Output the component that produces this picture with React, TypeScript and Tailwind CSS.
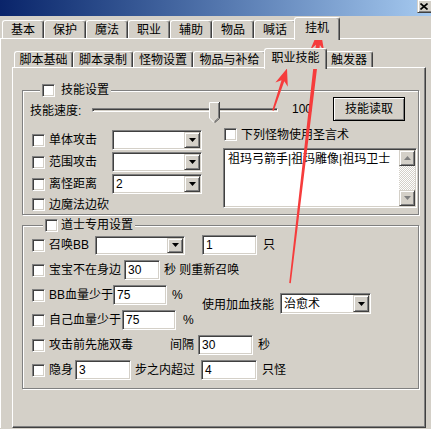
import React from "react";

const sunken =
  "border border-t-[#808080] border-l-[#808080] border-r-white border-b-white shadow-[inset_1px_1px_0_#404040,inset_-1px_-1px_0_#d4d0c8]";
const raised =
  "border border-t-[#d4d0c8] border-l-[#d4d0c8] border-r-[#404040] border-b-[#404040] shadow-[inset_1px_1px_0_#fff,inset_-1px_-1px_0_#808080]";
const etched = "border border-[#808080] shadow-[inset_1px_1px_0_#fff,1px_1px_0_#fff]";

const Check = () => <div className={`w-[13px] h-[13px] shrink-0 bg-white ${sunken}`} />;

const DownArrow = ({ color = "#000" }: { color?: string }) => (
  <svg width="7" height="4" viewBox="0 0 7 4">
    <path d="M0 0H7L3.5 4Z" fill={color} />
  </svg>
);

const UpArrow = ({ color = "#808080" }: { color?: string }) => (
  <svg width="7" height="4" viewBox="0 0 7 4">
    <path d="M0 4H7L3.5 0Z" fill={color} />
  </svg>
);

const Combo = ({ className, value = "" }: { className: string; value?: string }) => (
  <div className={`${className} flex shrink-0 p-[1px] bg-white ${sunken}`}>
    <span className="flex-1 pl-[2px] flex items-center whitespace-nowrap">{value}</span>
    <div className={`w-[16px] h-full flex items-center justify-center bg-[#d4d0c8] ${raised}`}>
      <DownArrow />
    </div>
  </div>
);

const Edit = ({ className, value }: { className: string; value: string }) => (
  <div className={`${className} h-[20px] shrink-0 flex items-center pl-[3px] bg-white ${sunken}`}>{value}</div>
);

const Tab = ({ label, className, active }: { label: string; className: string; active?: boolean }) => (
  <div
    className={`${className} shrink-0 flex items-center justify-center whitespace-nowrap bg-[#d4d0c8] border-t border-l border-r border-t-white border-l-white border-r-[#404040] rounded-t-[3px] shadow-[inset_-1px_0_0_#808080] ${
      active ? "relative z-10 -mx-[2px] -mb-[2px] pb-[2px]" : ""
    }`}
  >
    {label}
  </div>
);

const outerTabs = ["基本", "保护", "魔法", "职业", "辅助", "物品", "喊话"];

export default function App() {
  return (
    <div className="relative w-[431px] h-[429px] overflow-hidden bg-[#d4d0c8] text-[12px] leading-[14px] text-black font-['Liberation_Sans','Noto_Sans_CJK_SC',sans-serif]">
      {/* title bar */}
      <div className="h-[16px] flex justify-end bg-linear-to-r from-[#0a246a] to-[#a6caf0]">
        <div className={`w-[16px] h-[14px] -mt-[1px] -mr-[2px] flex items-center justify-center pr-[2px] bg-[#d4d0c8] ${raised}`}>
          <svg width="8" height="7" viewBox="0 0 8 7">
            <path d="M0.5 0.5L7.5 6.5M7.5 0.5L0.5 6.5" stroke="#000" strokeWidth="1.6" />
          </svg>
        </div>
      </div>

      {/* outer tabs */}
      <div className="flex items-end h-[22px] pl-[2px]">
        {outerTabs.map((t) => (
          <Tab key={t} label={t} className="w-[42px] h-[18px]" />
        ))}
        <Tab label="挂机" className="w-[46px] h-[23px]" active />
      </div>

      <div className="border-t border-l border-white pl-[11px] pt-[9px]">
        {/* inner tabs */}
        <div className="flex items-end h-[19px] pl-[2px]">
          <Tab label="脚本基础" className="w-[59px] h-[16px]" />
          <Tab label="脚本录制" className="w-[60px] h-[16px]" />
          <Tab label="怪物设置" className="w-[60px] h-[16px]" />
          <Tab label="物品与补给" className="w-[73px] h-[16px]" />
          <Tab label="职业技能" className="w-[63px] h-[21px]" active />
          <Tab label="触发器" className="w-[48px] h-[16px]" />
        </div>

        <div className="w-[414px] h-[361px] border border-t-white border-l-white border-r-[#404040] border-b-[#404040] shadow-[inset_-1px_-1px_0_#808080] pl-[9px] pt-[22px]">
          {/* group 1 */}
          <div className={`relative w-[397px] h-[125px] ${etched}`}>
            <div className="absolute left-[17px] -top-[8px] flex items-center h-[14px] px-[2px] bg-[#d4d0c8]">
              <Check />
              <span className="ml-[6px]">技能设置</span>
            </div>

            <div className="flex items-center h-[24px] mt-[6px] pl-[7px]">
              <span className="w-[62px] pt-[4px]">技能速度:</span>
              <div className="relative w-[186px] h-[24px] shrink-0">
                <div className="absolute left-0 right-0 top-[11px] h-[4px] border border-t-[#808080] border-l-[#808080] border-r-white border-b-white shadow-[inset_1px_1px_0_#404040]" />
                <svg className="absolute left-[117px] top-[5px]" width="11" height="21" viewBox="0 0 11 21">
                  <path d="M0 0H11V16L5.5 21L0 16Z" fill="#d4d0c8" />
                  <path d="M0.5 16V0.5H10" stroke="#fff" fill="none" />
                  <path d="M0.5 16L5 20.5" stroke="#fff" fill="none" />
                  <path d="M10.5 0V16.3L5.5 20.8" stroke="#404040" fill="none" />
                  <path d="M9.5 1V15.8L5.5 19.5" stroke="#808080" fill="none" />
                </svg>
              </div>
              <span className="w-[55px] pl-[14px] shrink-0">100</span>
              <div className="w-[72px] h-[24px] shrink-0 flex items-center justify-center border border-black shadow-[inset_1px_1px_0_#fff,inset_-1px_-1px_0_#808080]">
                技能读取
              </div>
            </div>

            <div className="flex mt-[9px] pl-[9px]">
              <div className="w-[170px] shrink-0">
                <div className="flex items-center h-[20px]">
                  <Check />
                  <span className="ml-[4px] w-[63px]">单体攻击</span>
                  <Combo className="w-[90px] h-[20px]" />
                </div>
                <div className="flex items-center h-[20px] mt-[2px]">
                  <Check />
                  <span className="ml-[4px] w-[63px]">范围攻击</span>
                  <Combo className="w-[90px] h-[20px]" />
                </div>
                <div className="flex items-center h-[20px] mt-[2px]">
                  <Check />
                  <span className="ml-[4px] w-[63px]">离怪距离</span>
                  <Combo className="w-[90px] h-[20px]" value="2" />
                </div>
                <div className="flex items-center h-[13px] mt-[4px]">
                  <Check />
                  <span className="ml-[4px]">边魔法边砍</span>
                </div>
              </div>

              <div className="ml-[21px] -mt-[2px] w-[194px]">
                <div className="flex items-center h-[13px] pl-[1px]">
                  <Check />
                  <span className="ml-[4px] whitespace-nowrap">下列怪物使用圣言术</span>
                </div>
                <div className={`mt-[7px] w-[194px] h-[60px] flex p-[1px] bg-white ${sunken}`}>
                  <div className="flex-1 pl-[3px] pt-[2px] whitespace-nowrap overflow-hidden">
                    祖玛弓箭手|祖玛雕像|祖玛卫士
                  </div>
                  <div className="w-[16px] flex flex-col">
                    <div className={`h-[16px] flex items-center justify-center bg-[#d4d0c8] ${raised}`}>
                      <UpArrow />
                    </div>
                    <div className="flex-1 bg-[image:repeating-conic-gradient(#fff_0_25%,#d4d0c8_0_50%)] bg-[length:2px_2px]" />
                    <div className={`h-[16px] flex items-center justify-center bg-[#d4d0c8] ${raised}`}>
                      <DownArrow color="#808080" />
                    </div>
                  </div>
                </div>
              </div>
            </div>
          </div>

          {/* group 2 */}
          <div className={`relative w-[397px] h-[164px] mt-[10px] pl-[9px] pt-[9px] ${etched}`}>
            <div className="absolute left-[20px] -top-[8px] flex items-center h-[14px] px-[2px] bg-[#d4d0c8]">
              <Check />
              <span className="ml-[3px]">道士专用设置</span>
            </div>

            <div className="flex items-center h-[20px]">
              <Check />
              <span className="ml-[4px] w-[46px]">召唤BB</span>
              <Combo className="w-[90px] h-[19px]" />
              <Edit className="ml-[17px] w-[55px]" value="1" />
              <span className="ml-[6px]">只</span>
            </div>

            <div className="flex items-center h-[20px] mt-[5px]">
              <Check />
              <span className="ml-[4px] w-[75px]">宝宝不在身边</span>
              <Edit className="w-[36px]" value="30" />
              <span className="ml-[4px] whitespace-nowrap">秒 则重新召唤</span>
            </div>

            <div className="flex mt-[5px]">
              <div className="w-[170px] shrink-0">
                <div className="flex items-center h-[20px]">
                  <Check />
                  <span className="ml-[4px] w-[64px]">BB血量少于</span>
                  <Edit className="w-[54px]" value="75" />
                  <span className="ml-[5px]">%</span>
                </div>
                <div className="flex items-center h-[20px] mt-[5px]">
                  <Check />
                  <span className="ml-[4px] w-[73px]">自己血量少于</span>
                  <Edit className="w-[54px]" value="75" />
                  <span className="ml-[7px]">%</span>
                </div>
              </div>
              <div className="flex items-center self-start mt-[8px]">
                <span className="w-[78px] pt-[3px]">使用加血技能</span>
                <Combo className="w-[91px] h-[21px]" value="治愈术" />
              </div>
            </div>

            <div className="flex items-center h-[20px] mt-[5px]">
              <Check />
              <span className="ml-[4px] w-[121px]">攻击前先施双毒</span>
              <span className="w-[28px]">间隔</span>
              <Edit className="w-[55px]" value="30" />
              <span className="ml-[5px]">秒</span>
            </div>

            <div className="flex items-center h-[20px] mt-[5px]">
              <Check />
              <span className="ml-[4px] w-[26px]">隐身</span>
              <Edit className="w-[56px]" value="3" />
              <span className="ml-[4px] w-[66px]">步之内超过</span>
              <Edit className="w-[56px]" value="4" />
              <span className="ml-[5px]">只怪</span>
            </div>
          </div>
        </div>
      </div>

      {/* red annotation arrows */}
      <svg className="absolute inset-0 pointer-events-none" width="431" height="429" viewBox="0 0 431 429">
        <path
          d="M320 27L324.2 51.6L319.9 45.1L290.8 283.2L289.2 283L315.9 44.7L310.2 50Z"
          fill="#f63c3c"
        />
        <path
          d="M287 68.5L287.8 86.7L284.3 81.3L273.8 110.8L272.2 110.2L281.5 80.3L275.4 82.5Z"
          fill="#f63c3c"
        />
      </svg>
    </div>
  );
}
